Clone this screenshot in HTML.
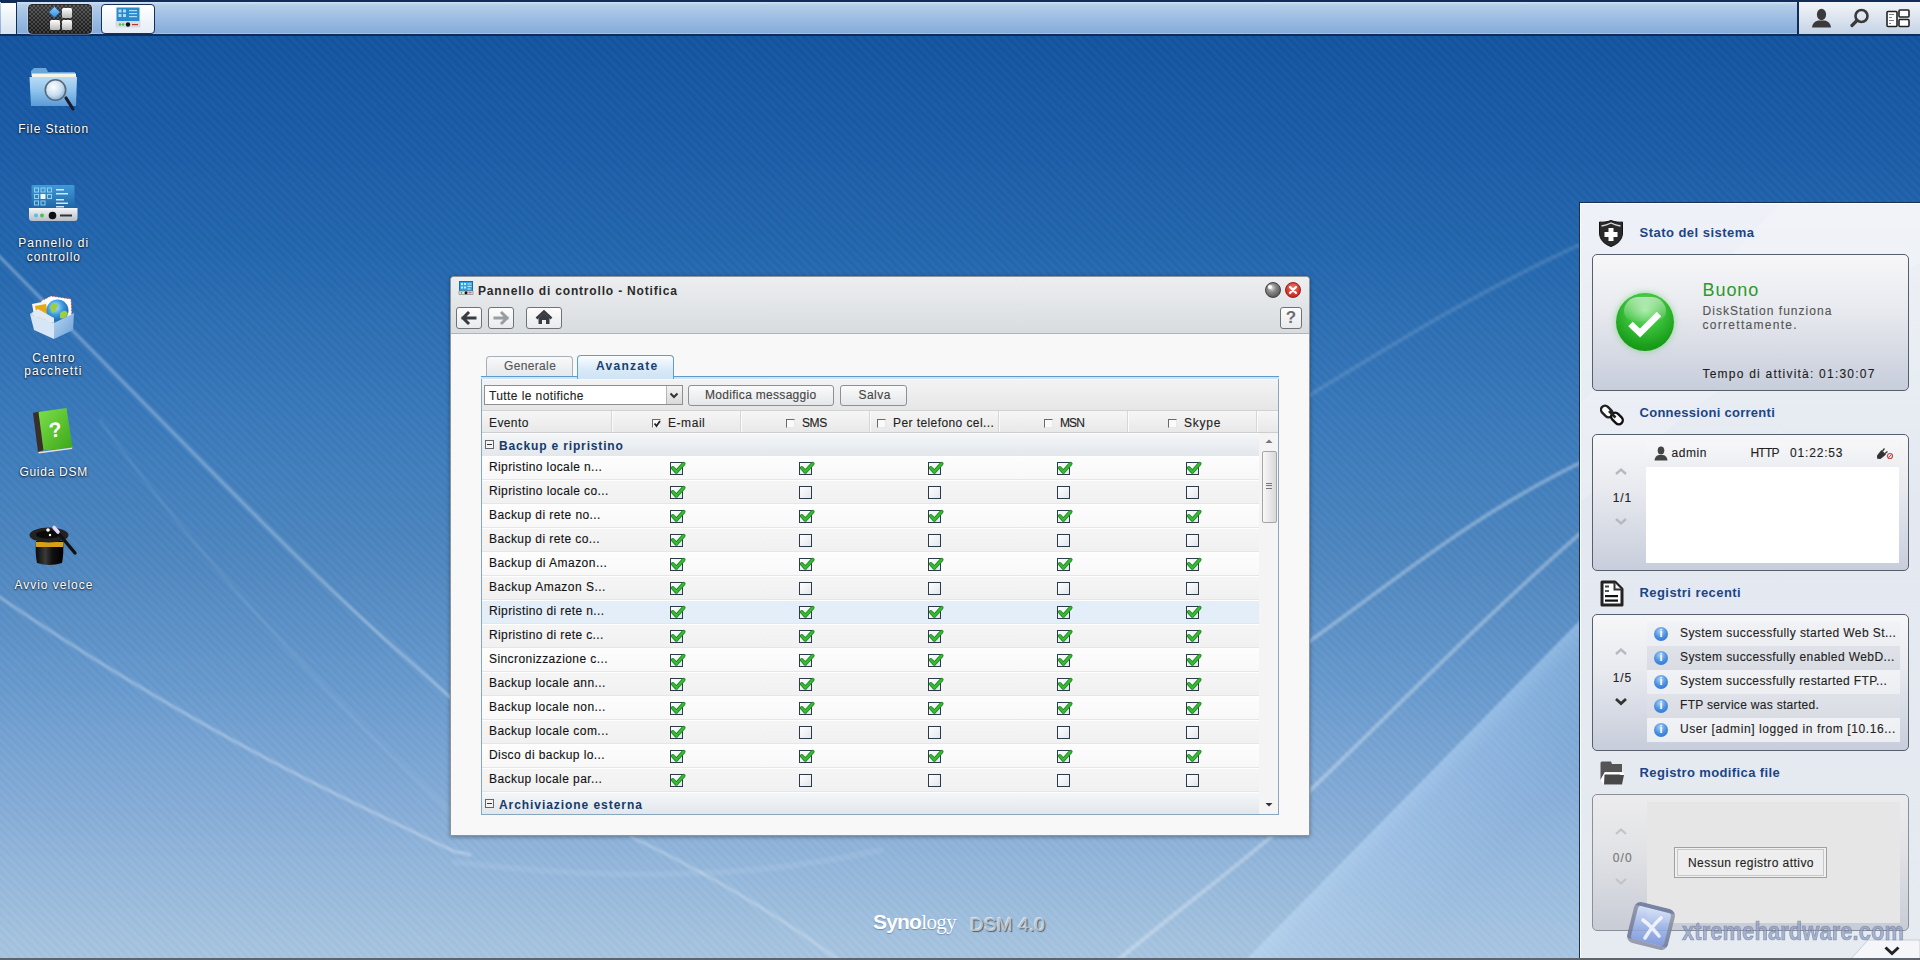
<!DOCTYPE html>
<html><head><meta charset="utf-8">
<style>
*{margin:0;padding:0;box-sizing:border-box;}
html,body{width:1920px;height:960px;overflow:hidden;}
body{position:relative;font-family:"Liberation Sans", sans-serif;font-size:12px;color:#222;
background:linear-gradient(180deg,#1254a0 0px,#1254a0 36px,#1a5ca8 150px,#2266ae 250px,#3a7abc 430px,#4e87c0 560px,#6699ce 680px,#84acd8 800px,#a4c3e0 940px,#a6c5e2 960px);}
.a{position:absolute;}
.t{position:absolute;white-space:nowrap;line-height:1;}
#stripes{position:absolute;left:0;top:0;width:1920px;height:960px;
background:repeating-linear-gradient(45deg,rgba(255,255,255,0.03) 0px,rgba(0,0,0,0.025) 3px,rgba(255,255,255,0.03) 6px);}
</style></head><body>
<div id="stripes"></div>
<svg class="a" style="left:0;top:0" width="1920" height="960" viewBox="0 0 1920 960">
<defs><filter id="blr" x="-10%" y="-10%" width="120%" height="120%"><feGaussianBlur stdDeviation="0.9"/></filter></defs>
<g fill="none" stroke="#ffffff" stroke-linecap="round" filter="url(#blr)">
<path d="M-5,252 C60,318 150,410 262,522 S400,650 470,716" stroke-opacity="0.32" stroke-width="3"/>
<path d="M-5,594 C80,652 200,728 350,801 S440,845 470,855" stroke-opacity="0.3" stroke-width="3"/>
<path d="M100,420 C200,560 330,700 470,830" stroke-opacity="0.1" stroke-width="2.5"/>
<path d="M1305,398 C1400,340 1480,290 1590,240" stroke-opacity="0.12" stroke-width="4"/>
<path d="M1300,648 C1390,585 1470,515 1590,458" stroke-opacity="0.3" stroke-width="4"/>
<path d="M1300,800 C1390,715 1480,620 1590,525" stroke-opacity="0.3" stroke-width="4"/>
<path d="M1272,836 C1220,880 1165,920 1112,965" stroke-opacity="0.28" stroke-width="4"/>
<path d="M630,836 C700,870 780,915 845,965" stroke-opacity="0.25" stroke-width="3"/>
<path d="M455,862 C600,880 750,880 880,850" stroke-opacity="0.08" stroke-width="6"/>
</g>
<defs><linearGradient id="band" gradientUnits="userSpaceOnUse" x1="1413" y1="790" x2="1484" y2="860"><stop offset="0" stop-color="#c8e4ff" stop-opacity="0.45"/><stop offset="0.2" stop-color="#c0dcfa" stop-opacity="0.32"/><stop offset="1" stop-color="#b0d0f4" stop-opacity="0.14"/></linearGradient></defs>
<path d="M1228,978 L1598,602 L1598,978 Z" fill="url(#band)" filter="url(#blr)"/>
</svg><svg class="a" style="left:0;top:0;overflow:visible" width="100" height="600" viewBox="0 0 100 600"><defs><linearGradient id="fold" x1="0" y1="0" x2="0" y2="1"><stop offset="0" stop-color="#b9dcf6"/><stop offset="0.5" stop-color="#8cc2ec"/><stop offset="1" stop-color="#5a9ad6"/></linearGradient><radialGradient id="lens" cx="0.4" cy="0.35" r="0.7"><stop offset="0" stop-color="#ffffff"/><stop offset="0.6" stop-color="#c8def0"/><stop offset="1" stop-color="#7aa8d0"/></radialGradient><linearGradient id="scr" x1="0" y1="0" x2="0" y2="1"><stop offset="0" stop-color="#3f9ad8"/><stop offset="1" stop-color="#1c5f9e"/></linearGradient><linearGradient id="base" x1="0" y1="0" x2="0" y2="1"><stop offset="0" stop-color="#f4f6f8"/><stop offset="1" stop-color="#b8bec6"/></linearGradient><radialGradient id="globe" cx="0.4" cy="0.35" r="0.7"><stop offset="0" stop-color="#bfe8ff"/><stop offset="0.5" stop-color="#3a9ae0"/><stop offset="1" stop-color="#1a5aa0"/></radialGradient><linearGradient id="box" x1="0" y1="0" x2="1" y2="1"><stop offset="0" stop-color="#b8d6f2"/><stop offset="1" stop-color="#6a9ed6"/></linearGradient><linearGradient id="book" x1="0" y1="0" x2="1" y2="1"><stop offset="0" stop-color="#7ee04a"/><stop offset="1" stop-color="#3aa618"/></linearGradient><linearGradient id="hat" x1="0" y1="0" x2="1" y2="0"><stop offset="0" stop-color="#0a0a0a"/><stop offset="0.35" stop-color="#3a3a3a"/><stop offset="0.6" stop-color="#111"/><stop offset="1" stop-color="#000"/></linearGradient></defs><path d="M34,68 H46 L48,72 H75 V76 H31 V71 Z" fill="#6aa6dc"/><rect x="32" y="73.5" width="44" height="5" fill="#f6f4e2"/><path d="M29.5,77 H77 L76,106 H31 Z" fill="url(#fold)"/><path d="M66,98 L73,109" stroke="#1a1a2a" stroke-width="3.2" stroke-linecap="round"/><circle cx="55.5" cy="90" r="10.2" fill="url(#lens)" stroke="#5a6878" stroke-width="1.6"/><rect x="31.5" y="185" width="43" height="26" rx="1.5" fill="url(#scr)"/><g fill="none" stroke="#8fd0f4" stroke-width="1"><rect x="34.5" y="188" width="4" height="4"/><rect x="41" y="188" width="4" height="4"/><rect x="47.5" y="188" width="4" height="4"/><rect x="34.5" y="194.5" width="4" height="4"/><rect x="47.5" y="194.5" width="4" height="4"/><rect x="34.5" y="201" width="4" height="4"/><rect x="41" y="201" width="4" height="4"/></g><rect x="40.5" y="194" width="5" height="5" fill="#e8f6ff"/><g fill="#cde8fa"><rect x="56" y="189" width="8" height="1.5"/><rect x="56" y="193" width="12" height="1.5"/><rect x="56" y="199" width="8" height="1.5"/><rect x="56" y="202.5" width="12" height="1.5"/><rect x="56" y="206" width="8" height="1.5"/></g><path d="M29,208 H77.5 V218 Q77.5,221 74.5,221 H32 Q29,221 29,218 Z" fill="url(#base)"/><circle cx="36" cy="215.5" r="2" fill="#5ab8f0"/><circle cx="42" cy="215.5" r="2" fill="#50c050"/><circle cx="52.5" cy="215.5" r="3.8" fill="#111"/><rect x="60" y="214.5" width="12" height="2" fill="#333"/><path d="M41,301 L51,296 L71,299 L72,318 L50,322 Z" fill="#fff" stroke="#c84040" stroke-width="0.8" stroke-dasharray="1.5 1.5"/><path d="M32,304 L47,301 L51,322 L36,326 Z" fill="#f4f4f4"/><path d="M35,306 L46,304 L49,320 L38,322 Z" fill="#e8a810"/><circle cx="57.5" cy="310.5" r="11" fill="url(#globe)"/><path d="M50,306 Q54,302 58,305 Q56,312 52,313 Z M60,313 Q66,308 68,314 Q64,320 60,318 Z" fill="#9ad040"/><path d="M30,314 L54,323 L54,339 L34,330 Z" fill="#d6e6f6"/><path d="M54,323 L74,313 L73,330 L54,339 Z" fill="url(#box)"/><path d="M30,314 L38,309 L54,318 L54,323 Z" fill="#dfeaf6"/><path d="M33,413 L39,411.5 L44,450 L38,452 Z" fill="#3a2e2a"/><path d="M38.5,412 L66.5,408 L72.5,447.5 L43.5,450.5 Z" fill="url(#book)"/><path d="M38,452 L72.5,447.5 L72,449 L39,453.5 Z" fill="#e0e0d0"/><text x="55" y="437" font-family="Liberation Sans" font-weight="bold" font-size="21" fill="#fff" text-anchor="middle" transform="rotate(-7 55 428)">?</text><path d="M36,541 Q35,553 37,563 Q49,567 62,563 Q64,553 63,541 Z" fill="url(#hat)"/><rect x="36" y="542" width="27" height="5" fill="#d8a018"/><ellipse cx="49" cy="535" rx="19.5" ry="7.5" fill="#222"/><ellipse cx="48" cy="534.5" rx="12" ry="4" fill="#0a0a0a"/><path d="M54,528 L75,553" stroke="#111" stroke-width="3.4" stroke-linecap="round"/><path d="M54,527.5 L58,532" stroke="#e6d8ff" stroke-width="3.6" stroke-linecap="round"/><circle cx="48" cy="530" r="1.8" fill="#fff"/><circle cx="50" cy="535" r="1.2" fill="#fff"/></svg><div class="t" style="left:18.3px;top:122.84px;font-size:12px;letter-spacing:0.889px;color:#fff;font-weight:normal;color:#fff;text-shadow:0 1px 2px rgba(0,0,0,0.75),0 0 2px rgba(0,0,0,0.5);">File Station</div><div class="t" style="left:18.3px;top:236.84px;font-size:12px;letter-spacing:1.042px;color:#fff;font-weight:normal;color:#fff;text-shadow:0 1px 2px rgba(0,0,0,0.75),0 0 2px rgba(0,0,0,0.5);">Pannello di</div><div class="t" style="left:26.7px;top:250.84px;font-size:12px;letter-spacing:0.993px;color:#fff;font-weight:normal;color:#fff;text-shadow:0 1px 2px rgba(0,0,0,0.75),0 0 2px rgba(0,0,0,0.5);">controllo</div><div class="t" style="left:32.3px;top:351.84px;font-size:12px;letter-spacing:1.217px;color:#fff;font-weight:normal;color:#fff;text-shadow:0 1px 2px rgba(0,0,0,0.75),0 0 2px rgba(0,0,0,0.5);">Centro</div><div class="t" style="left:24.2px;top:364.84px;font-size:12px;letter-spacing:1.161px;color:#fff;font-weight:normal;color:#fff;text-shadow:0 1px 2px rgba(0,0,0,0.75),0 0 2px rgba(0,0,0,0.5);">pacchetti</div><div class="t" style="left:19.4px;top:465.84px;font-size:12px;letter-spacing:0.723px;color:#fff;font-weight:normal;color:#fff;text-shadow:0 1px 2px rgba(0,0,0,0.75),0 0 2px rgba(0,0,0,0.5);">Guida DSM</div><div class="t" style="left:14.5px;top:578.84px;font-size:12px;letter-spacing:0.969px;color:#fff;font-weight:normal;color:#fff;text-shadow:0 1px 2px rgba(0,0,0,0.75),0 0 2px rgba(0,0,0,0.5);">Avvio veloce</div><div class="t" style="left:873px;top:911px;font-size:21px;font-weight:bold;color:#fff;letter-spacing:-0.8px;text-shadow:0 1px 1px rgba(60,90,130,0.5);">Syno<span style="font-family:'Liberation Serif',serif;font-weight:normal;letter-spacing:-0.6px;">logy</span></div><div class="t" style="left:970px;top:915px;font-size:19px;color:#b9c3cc;letter-spacing:0.2px;text-shadow:1px 1px 1px rgba(40,50,60,0.7),-1px -1px 0 rgba(255,255,255,0.6);">DSM 4.0</div><div class="a" style="left:0;top:0;width:1920px;height:36px;background:#0f2d58;"></div><div class="a" style="left:0;top:2px;width:1920px;height:32px;background:linear-gradient(180deg,#d2e2f3 0,#b4cde9 3px,#9dbde3 16px,#86acd9 31px,#c4d6ec 32px);"></div><div class="a" style="left:1px;top:2px;width:16px;height:33px;background:linear-gradient(180deg,#ffffff,#d7e3f0);border:1px solid #142c52;border-left:none;"></div><div class="a" style="left:28px;top:4px;width:64px;height:30px;border-radius:4px;background:linear-gradient(180deg,rgba(255,255,255,0.12) 0,rgba(255,255,255,0.04) 50%,rgba(0,0,0,0.1) 100%),repeating-conic-gradient(#1c1c1c 0 25%,#484848 0 50%) 0 0/4px 4px;border:1px solid #2a2a2a;box-shadow:0 0 0 1px rgba(255,255,255,0.25);"></div><div class="a" style="left:101px;top:4px;width:54px;height:30px;border-radius:4px;background:linear-gradient(180deg,#ffffff,#e6edf5);border:1px solid #14305c;"></div><div class="a" style="left:1797px;top:2px;width:123px;height:33px;background:linear-gradient(180deg,#f2f5fa 0,#dce4ef 50%,#c4d3e6 100%);border-left:2px solid #0f2d58;border-bottom:1px solid #0f2d58;"></div><svg class="a" style="left:28px;top:4px" width="64" height="30" viewBox="0 0 64 30"><defs><linearGradient id="sq" x1="0" y1="0" x2="0" y2="1"><stop offset="0" stop-color="#ffffff"/><stop offset="1" stop-color="#b8b8b8"/></linearGradient><linearGradient id="dia" x1="0" y1="0" x2="0" y2="1"><stop offset="0" stop-color="#8ed0ff"/><stop offset="1" stop-color="#2a8ae0"/></linearGradient></defs><path d="M26.5,2.5 L32,8.2 L26.5,14 L21,8.2 Z" fill="url(#dia)" stroke="#1a4a80" stroke-width="0.6"/><rect x="34" y="4" width="10" height="10" rx="1.5" fill="url(#sq)"/><rect x="22" y="16" width="10" height="10" rx="1.5" fill="url(#sq)"/><rect x="34" y="16" width="10" height="10" rx="1.5" fill="url(#sq)"/></svg><svg class="a" style="left:101px;top:4px" width="54" height="30" viewBox="0 0 54 30"><rect x="15.5" y="3.5" width="23" height="14" fill="#2a8ad0"/><g fill="#a8dcf8"><rect x="17.5" y="5.5" width="3" height="3"/><rect x="22" y="5.5" width="3" height="3"/><rect x="17.5" y="10" width="3" height="3"/><rect x="22" y="10" width="3" height="3"/><rect x="28" y="6" width="8" height="1.2"/><rect x="28" y="9" width="8" height="1.2"/><rect x="28" y="12" width="8" height="1.2"/></g><path d="M14.5,17 H39.5 V22 Q39.5,23.5 38,23.5 H16 Q14.5,23.5 14.5,22 Z" fill="#d6dce2"/><circle cx="27" cy="20.5" r="2.2" fill="#111"/><circle cx="19" cy="20.5" r="1.2" fill="#50c050"/><circle cx="22" cy="20.5" r="1.2" fill="#50c050"/><rect x="31" y="20" width="6" height="1.2" fill="#c03040"/></svg><svg class="a" style="left:1810px;top:8px" width="104" height="22" viewBox="0 0 104 22"><ellipse cx="11.5" cy="6.5" rx="4.6" ry="5.8" fill="#3a3a3a"/><path d="M2,19.5 Q2.5,14 8,12.5 L15,12.5 Q20.5,14 21,19.5 Z" fill="#3a3a3a"/><circle cx="51.5" cy="8" r="6" fill="none" stroke="#3a3a3a" stroke-width="2.6"/><path d="M47,12.5 L42,17.5" stroke="#3a3a3a" stroke-width="3.2" stroke-linecap="round"/><rect x="77" y="3.5" width="10" height="15" rx="1" fill="#fff" stroke="#222" stroke-width="1.6"/><rect x="89" y="2" width="10" height="7" rx="1" fill="#fff" stroke="#222" stroke-width="1.6"/><rect x="89" y="11.5" width="10" height="7" rx="1" fill="#fff" stroke="#222" stroke-width="1.6"/><g fill="#666"><rect x="79" y="6" width="5" height="0.8"/><rect x="79" y="9" width="3" height="0.8"/><rect x="79" y="12" width="5" height="0.8"/><rect x="79" y="15" width="2" height="0.8"/></g></svg><svg width="0" height="0" style="position:absolute"><defs><linearGradient id="cbg" x1="0" y1="0" x2="1" y2="1"><stop offset="0" stop-color="#ffffff"/><stop offset="1" stop-color="#e2e6ea"/></linearGradient></defs></svg><div class="a" style="left:450px;top:276px;width:860px;height:560px;background:#f8f8f8;border:1px solid #8f949a;border-radius:4px 4px 0 0;box-shadow:0 1px 4px rgba(0,0,0,0.35);"></div><div class="a" style="left:451px;top:277px;width:858px;height:57px;background:linear-gradient(180deg,#eceef0,#d9dcdf);border-bottom:1px solid #b0b4b8;border-radius:3px 3px 0 0;"></div><svg class="a" style="left:458px;top:280px" width="16" height="16" viewBox="0 0 16 16"><rect x="1.5" y="1.5" width="13" height="9.5" fill="#2ea4e4" stroke="#1a6a9a" stroke-width="1"/><g fill="#bfeaff"><rect x="3" y="3" width="2" height="2"/><rect x="6" y="3" width="2" height="2"/><rect x="3" y="6.5" width="2" height="2"/><rect x="6" y="6.5" width="2" height="2"/><rect x="9.5" y="3.5" width="4" height="1"/><rect x="9.5" y="6" width="4" height="1"/><rect x="9.5" y="8.5" width="3" height="1"/></g><path d="M1,11 H15 V14.5 H1 Z" fill="#e4e8ec" stroke="#8a9098" stroke-width="0.8"/><circle cx="3.5" cy="12.8" r="0.9" fill="#3cb043"/><circle cx="8" cy="12.8" r="1.5" fill="#111"/><rect x="10.5" y="12.3" width="3" height="1" fill="#c04050"/></svg><div class="t" style="left:478px;top:284.84px;font-size:12px;letter-spacing:0.824px;color:#2a2a2a;font-weight:bold;">Pannello di controllo - Notifica</div><div class="a" style="left:456px;top:307px;width:26px;height:22px;border:1px solid #6f7378;border-radius:3px;background:linear-gradient(180deg,#fdfdfd,#e9eaec);"></div><div class="a" style="left:488px;top:307px;width:26px;height:22px;border:1px solid #6f7378;border-radius:3px;background:linear-gradient(180deg,#fdfdfd,#e9eaec);"></div><div class="a" style="left:526px;top:307px;width:36px;height:22px;border:1px solid #6f7378;border-radius:3px;background:linear-gradient(180deg,#fdfdfd,#e9eaec);"></div><div class="a" style="left:1280px;top:307px;width:22px;height:22px;border:1px solid #6f7378;border-radius:3px;background:linear-gradient(180deg,#fdfdfd,#e9eaec);"></div><svg class="a" style="left:456px;top:307px" width="26" height="22" viewBox="0 0 26 22"><path d="M7,11 L12,6 M7,11 L12,16 M7,11 L19,11" stroke="#383c40" stroke-width="3" fill="none" stroke-linecap="square"/></svg><svg class="a" style="left:488px;top:307px" width="26" height="22" viewBox="0 0 26 22"><path d="M19,11 L14,6 M19,11 L14,16 M19,11 L7,11" stroke="#9a9da0" stroke-width="3" fill="none" stroke-linecap="square"/></svg><svg class="a" style="left:526px;top:307px" width="36" height="22" viewBox="0 0 36 22"><path d="M10.5,11.5 L18,4.5 L25.5,11.5" stroke="#383c40" stroke-width="2.6" fill="none"/><path d="M12.5,11 L18,6 L23.5,11 L23.5,17 L20,17 L20,13 L16,13 L16,17 L12.5,17 Z" fill="#383c40"/></svg><div class="t" style="left:1285px;top:309px;width:12px;text-align:center;font-size:17px;font-weight:bold;color:#6c6f72;">?</div><div class="a" style="left:1265px;top:282px;width:16px;height:16px;border-radius:8px;background:radial-gradient(circle at 40% 35%,#e0e0e0 0,#8a8a8a 35%,#5a5a5a 75%,#3a3a3a 100%);border:1px solid #404040;"></div><div class="a" style="left:1268px;top:285px;width:4px;height:4px;border-radius:2px;background:#fff;"></div><div class="a" style="left:1285px;top:282px;width:16px;height:16px;border-radius:8px;background:radial-gradient(circle at 50% 35%,#f07a70 0,#d43a30 55%,#b0201a 100%);border:1px solid #a01a14;"></div><svg class="a" style="left:1285px;top:282px" width="16" height="16" viewBox="0 0 16 16"><path d="M5,5 L11,11 M11,5 L5,11" stroke="#fff" stroke-width="2.4" stroke-linecap="round"/></svg><div class="a" style="left:486px;top:356px;width:87px;height:21px;border:1px solid #a7b0b8;border-bottom:none;border-radius:4px 4px 0 0;background:linear-gradient(180deg,#f8f9fa,#e3e7eb);"></div><div class="t" style="left:504px;top:359.84px;font-size:12px;letter-spacing:0.349px;color:#555;font-weight:normal;-webkit-text-stroke:0.12px currentColor;">Generale</div><div class="a" style="left:481px;top:376px;width:798px;height:4px;background:#cfe3f4;border-top:1px solid #5c9ccd;border-bottom:1px solid #5c9ccd;"></div><div class="a" style="left:577px;top:355px;width:97px;height:24px;border:1px solid #5f9dd0;border-bottom:none;border-radius:4px 4px 0 0;background:linear-gradient(180deg,#fafdff,#d8e9f8 60%,#cfe3f4);"></div><div class="t" style="left:596px;top:359.84px;font-size:12px;letter-spacing:1.279px;color:#1b3f6e;font-weight:bold;">Avanzate</div><div class="a" style="left:481px;top:379px;width:798px;height:436px;border:1px solid #88a6bd;border-top:none;background:#f8f8f8;"></div><div class="a" style="left:482px;top:380px;width:796px;height:31px;background:linear-gradient(180deg,#f3f3f3,#e6e6e6);border-bottom:1px solid #d2d2d2;"></div><div class="a" style="left:484px;top:385px;width:199px;height:20px;border:1px solid #8f8f8f;background:#fff;"></div><div class="a" style="left:666px;top:386px;width:16px;height:18px;border-left:1px solid #b5b5b5;background:linear-gradient(180deg,#f4f4f4,#d9d9d9);"></div><svg class="a" style="left:666px;top:386px" width="16" height="18" viewBox="0 0 16 18"><path d="M4.5,7.5 L8,11 L11.5,7.5" stroke="#333" stroke-width="2" fill="none"/></svg><div class="t" style="left:489px;top:389.84px;font-size:12px;letter-spacing:0.407px;color:#222;font-weight:normal;-webkit-text-stroke:0.12px currentColor;">Tutte le notifiche</div><div class="a" style="left:688px;top:385px;width:146px;height:21px;border:1px solid #8c8f93;border-radius:3px;background:linear-gradient(180deg,#fbfbfb,#e4e6e8);"></div><div class="t" style="left:705px;top:388.84px;font-size:12px;letter-spacing:0.303px;color:#444;font-weight:normal;-webkit-text-stroke:0.12px currentColor;">Modifica messaggio</div><div class="a" style="left:840px;top:385px;width:67px;height:21px;border:1px solid #8c8f93;border-radius:3px;background:linear-gradient(180deg,#fbfbfb,#e4e6e8);"></div><div class="t" style="left:858.5px;top:388.84px;font-size:12px;letter-spacing:0.446px;color:#444;font-weight:normal;-webkit-text-stroke:0.12px currentColor;">Salva</div><div class="a" style="left:482px;top:411px;width:796px;height:22px;background:linear-gradient(180deg,#f6f6f6,#e8e8e8);border-bottom:1px solid #cdcdcd;"></div><div class="a" style="left:611px;top:411px;width:1px;height:21px;background:#d6d6d6;"></div><div class="a" style="left:612px;top:411px;width:1px;height:21px;background:#fbfbfb;"></div><div class="a" style="left:740px;top:411px;width:1px;height:21px;background:#d6d6d6;"></div><div class="a" style="left:741px;top:411px;width:1px;height:21px;background:#fbfbfb;"></div><div class="a" style="left:869px;top:411px;width:1px;height:21px;background:#d6d6d6;"></div><div class="a" style="left:870px;top:411px;width:1px;height:21px;background:#fbfbfb;"></div><div class="a" style="left:998px;top:411px;width:1px;height:21px;background:#d6d6d6;"></div><div class="a" style="left:999px;top:411px;width:1px;height:21px;background:#fbfbfb;"></div><div class="a" style="left:1127px;top:411px;width:1px;height:21px;background:#d6d6d6;"></div><div class="a" style="left:1128px;top:411px;width:1px;height:21px;background:#fbfbfb;"></div><div class="a" style="left:1256px;top:411px;width:1px;height:21px;background:#d6d6d6;"></div><div class="a" style="left:1257px;top:411px;width:1px;height:21px;background:#fbfbfb;"></div><div class="t" style="left:489px;top:416.84px;font-size:12px;letter-spacing:0.391px;color:#222;font-weight:normal;-webkit-text-stroke:0.12px currentColor;">Evento</div><div class="a" style="left:652px;top:419px;width:9px;height:9px;border-top:1.5px solid #6a6a6a;border-left:1.5px solid #6a6a6a;border-right:1px solid #e8e8e8;border-bottom:1px solid #e8e8e8;background:#fafafa;"></div><svg class="a" style="left:652px;top:419px" width="10" height="10" viewBox="0 0 10 10"><path d="M2.5,4.5 L4.5,7 L8,2" stroke="#222" stroke-width="1.8" fill="none"/></svg><div class="t" style="left:668px;top:416.84px;font-size:12px;letter-spacing:0.557px;color:#222;font-weight:normal;-webkit-text-stroke:0.12px currentColor;">E-mail</div><div class="a" style="left:786px;top:419px;width:9px;height:9px;border-top:1.5px solid #6a6a6a;border-left:1.5px solid #6a6a6a;border-right:1px solid #e8e8e8;border-bottom:1px solid #e8e8e8;background:#fafafa;"></div><div class="t" style="left:802px;top:416.84px;font-size:12px;letter-spacing:-0.400px;color:#222;font-weight:normal;-webkit-text-stroke:0.12px currentColor;">SMS</div><div class="a" style="left:877px;top:419px;width:9px;height:9px;border-top:1.5px solid #6a6a6a;border-left:1.5px solid #6a6a6a;border-right:1px solid #e8e8e8;border-bottom:1px solid #e8e8e8;background:#fafafa;"></div><div class="t" style="left:893px;top:416.84px;font-size:12px;letter-spacing:0.414px;color:#222;font-weight:normal;-webkit-text-stroke:0.12px currentColor;">Per telefono cel...</div><div class="a" style="left:1044px;top:419px;width:9px;height:9px;border-top:1.5px solid #6a6a6a;border-left:1.5px solid #6a6a6a;border-right:1px solid #e8e8e8;border-bottom:1px solid #e8e8e8;background:#fafafa;"></div><div class="t" style="left:1060px;top:416.84px;font-size:12px;letter-spacing:-0.936px;color:#222;font-weight:normal;-webkit-text-stroke:0.12px currentColor;">MSN</div><div class="a" style="left:1168px;top:419px;width:9px;height:9px;border-top:1.5px solid #6a6a6a;border-left:1.5px solid #6a6a6a;border-right:1px solid #e8e8e8;border-bottom:1px solid #e8e8e8;background:#fafafa;"></div><div class="t" style="left:1184px;top:416.84px;font-size:12px;letter-spacing:0.764px;color:#222;font-weight:normal;-webkit-text-stroke:0.12px currentColor;">Skype</div><div class="a" style="left:482px;top:433px;width:777px;height:23px;background:linear-gradient(180deg,#f4f6f8,#e2e7ec);border-top:1px solid #fbfcfd;"></div><div class="a" style="left:485px;top:440px;width:9px;height:9px;border:1px solid #666;background:#f4f4f4;"></div><div class="a" style="left:487px;top:444px;width:5px;height:1px;background:#333;"></div><div class="t" style="left:499px;top:439.84px;font-size:12px;letter-spacing:0.841px;color:#143a6a;font-weight:bold;">Backup e ripristino</div><div class="a" style="left:482px;top:456px;width:777px;height:24px;background:linear-gradient(180deg,#fdfdfd,#f8f8f8);border-top:1px solid #ffffff;border-bottom:1px solid #e6e6e6;"></div><div class="t" style="left:489px;top:460.84px;font-size:12px;letter-spacing:0.387px;color:#111;font-weight:normal;-webkit-text-stroke:0.12px currentColor;">Ripristino locale n...</div><div class="a" style="left:670px;top:462px;width:13px;height:13px;"><svg width="16" height="16" viewBox="0 0 16 16" style="position:absolute;left:0;top:-1px;overflow:visible"><rect x="0.5" y="1.5" width="12" height="12" fill="url(#cbg)" stroke="#2b3b4b" stroke-width="1"/><path d="M2.8,7 L6.4,10.8 L13.6,2.8" fill="none" stroke="#1a861a" stroke-width="3.9" stroke-linecap="round" stroke-linejoin="round"/><path d="M2.8,7 L6.4,10.8 L13.6,2.8" fill="none" stroke="#36ba36" stroke-width="2.3" stroke-linecap="round" stroke-linejoin="round"/></svg></div><div class="a" style="left:799px;top:462px;width:13px;height:13px;"><svg width="16" height="16" viewBox="0 0 16 16" style="position:absolute;left:0;top:-1px;overflow:visible"><rect x="0.5" y="1.5" width="12" height="12" fill="url(#cbg)" stroke="#2b3b4b" stroke-width="1"/><path d="M2.8,7 L6.4,10.8 L13.6,2.8" fill="none" stroke="#1a861a" stroke-width="3.9" stroke-linecap="round" stroke-linejoin="round"/><path d="M2.8,7 L6.4,10.8 L13.6,2.8" fill="none" stroke="#36ba36" stroke-width="2.3" stroke-linecap="round" stroke-linejoin="round"/></svg></div><div class="a" style="left:928px;top:462px;width:13px;height:13px;"><svg width="16" height="16" viewBox="0 0 16 16" style="position:absolute;left:0;top:-1px;overflow:visible"><rect x="0.5" y="1.5" width="12" height="12" fill="url(#cbg)" stroke="#2b3b4b" stroke-width="1"/><path d="M2.8,7 L6.4,10.8 L13.6,2.8" fill="none" stroke="#1a861a" stroke-width="3.9" stroke-linecap="round" stroke-linejoin="round"/><path d="M2.8,7 L6.4,10.8 L13.6,2.8" fill="none" stroke="#36ba36" stroke-width="2.3" stroke-linecap="round" stroke-linejoin="round"/></svg></div><div class="a" style="left:1057px;top:462px;width:13px;height:13px;"><svg width="16" height="16" viewBox="0 0 16 16" style="position:absolute;left:0;top:-1px;overflow:visible"><rect x="0.5" y="1.5" width="12" height="12" fill="url(#cbg)" stroke="#2b3b4b" stroke-width="1"/><path d="M2.8,7 L6.4,10.8 L13.6,2.8" fill="none" stroke="#1a861a" stroke-width="3.9" stroke-linecap="round" stroke-linejoin="round"/><path d="M2.8,7 L6.4,10.8 L13.6,2.8" fill="none" stroke="#36ba36" stroke-width="2.3" stroke-linecap="round" stroke-linejoin="round"/></svg></div><div class="a" style="left:1186px;top:462px;width:13px;height:13px;"><svg width="16" height="16" viewBox="0 0 16 16" style="position:absolute;left:0;top:-1px;overflow:visible"><rect x="0.5" y="1.5" width="12" height="12" fill="url(#cbg)" stroke="#2b3b4b" stroke-width="1"/><path d="M2.8,7 L6.4,10.8 L13.6,2.8" fill="none" stroke="#1a861a" stroke-width="3.9" stroke-linecap="round" stroke-linejoin="round"/><path d="M2.8,7 L6.4,10.8 L13.6,2.8" fill="none" stroke="#36ba36" stroke-width="2.3" stroke-linecap="round" stroke-linejoin="round"/></svg></div><div class="a" style="left:482px;top:480px;width:777px;height:24px;background:linear-gradient(180deg,#f5f5f5,#f1f1f1);border-top:1px solid #ffffff;border-bottom:1px solid #e6e6e6;"></div><div class="t" style="left:489px;top:484.84px;font-size:12px;letter-spacing:0.389px;color:#111;font-weight:normal;-webkit-text-stroke:0.12px currentColor;">Ripristino locale co...</div><div class="a" style="left:670px;top:486px;width:13px;height:13px;"><svg width="16" height="16" viewBox="0 0 16 16" style="position:absolute;left:0;top:-1px;overflow:visible"><rect x="0.5" y="1.5" width="12" height="12" fill="url(#cbg)" stroke="#2b3b4b" stroke-width="1"/><path d="M2.8,7 L6.4,10.8 L13.6,2.8" fill="none" stroke="#1a861a" stroke-width="3.9" stroke-linecap="round" stroke-linejoin="round"/><path d="M2.8,7 L6.4,10.8 L13.6,2.8" fill="none" stroke="#36ba36" stroke-width="2.3" stroke-linecap="round" stroke-linejoin="round"/></svg></div><div class="a" style="left:799px;top:486px;width:13px;height:13px;"><svg width="16" height="16" viewBox="0 0 16 16" style="position:absolute;left:0;top:-1px;overflow:visible"><rect x="0.5" y="1.5" width="12" height="12" fill="url(#cbg)" stroke="#2b3b4b" stroke-width="1"/></svg></div><div class="a" style="left:928px;top:486px;width:13px;height:13px;"><svg width="16" height="16" viewBox="0 0 16 16" style="position:absolute;left:0;top:-1px;overflow:visible"><rect x="0.5" y="1.5" width="12" height="12" fill="url(#cbg)" stroke="#2b3b4b" stroke-width="1"/></svg></div><div class="a" style="left:1057px;top:486px;width:13px;height:13px;"><svg width="16" height="16" viewBox="0 0 16 16" style="position:absolute;left:0;top:-1px;overflow:visible"><rect x="0.5" y="1.5" width="12" height="12" fill="url(#cbg)" stroke="#2b3b4b" stroke-width="1"/></svg></div><div class="a" style="left:1186px;top:486px;width:13px;height:13px;"><svg width="16" height="16" viewBox="0 0 16 16" style="position:absolute;left:0;top:-1px;overflow:visible"><rect x="0.5" y="1.5" width="12" height="12" fill="url(#cbg)" stroke="#2b3b4b" stroke-width="1"/></svg></div><div class="a" style="left:482px;top:504px;width:777px;height:24px;background:linear-gradient(180deg,#fdfdfd,#f8f8f8);border-top:1px solid #ffffff;border-bottom:1px solid #e6e6e6;"></div><div class="t" style="left:489px;top:508.84px;font-size:12px;letter-spacing:0.423px;color:#111;font-weight:normal;-webkit-text-stroke:0.12px currentColor;">Backup di rete no...</div><div class="a" style="left:670px;top:510px;width:13px;height:13px;"><svg width="16" height="16" viewBox="0 0 16 16" style="position:absolute;left:0;top:-1px;overflow:visible"><rect x="0.5" y="1.5" width="12" height="12" fill="url(#cbg)" stroke="#2b3b4b" stroke-width="1"/><path d="M2.8,7 L6.4,10.8 L13.6,2.8" fill="none" stroke="#1a861a" stroke-width="3.9" stroke-linecap="round" stroke-linejoin="round"/><path d="M2.8,7 L6.4,10.8 L13.6,2.8" fill="none" stroke="#36ba36" stroke-width="2.3" stroke-linecap="round" stroke-linejoin="round"/></svg></div><div class="a" style="left:799px;top:510px;width:13px;height:13px;"><svg width="16" height="16" viewBox="0 0 16 16" style="position:absolute;left:0;top:-1px;overflow:visible"><rect x="0.5" y="1.5" width="12" height="12" fill="url(#cbg)" stroke="#2b3b4b" stroke-width="1"/><path d="M2.8,7 L6.4,10.8 L13.6,2.8" fill="none" stroke="#1a861a" stroke-width="3.9" stroke-linecap="round" stroke-linejoin="round"/><path d="M2.8,7 L6.4,10.8 L13.6,2.8" fill="none" stroke="#36ba36" stroke-width="2.3" stroke-linecap="round" stroke-linejoin="round"/></svg></div><div class="a" style="left:928px;top:510px;width:13px;height:13px;"><svg width="16" height="16" viewBox="0 0 16 16" style="position:absolute;left:0;top:-1px;overflow:visible"><rect x="0.5" y="1.5" width="12" height="12" fill="url(#cbg)" stroke="#2b3b4b" stroke-width="1"/><path d="M2.8,7 L6.4,10.8 L13.6,2.8" fill="none" stroke="#1a861a" stroke-width="3.9" stroke-linecap="round" stroke-linejoin="round"/><path d="M2.8,7 L6.4,10.8 L13.6,2.8" fill="none" stroke="#36ba36" stroke-width="2.3" stroke-linecap="round" stroke-linejoin="round"/></svg></div><div class="a" style="left:1057px;top:510px;width:13px;height:13px;"><svg width="16" height="16" viewBox="0 0 16 16" style="position:absolute;left:0;top:-1px;overflow:visible"><rect x="0.5" y="1.5" width="12" height="12" fill="url(#cbg)" stroke="#2b3b4b" stroke-width="1"/><path d="M2.8,7 L6.4,10.8 L13.6,2.8" fill="none" stroke="#1a861a" stroke-width="3.9" stroke-linecap="round" stroke-linejoin="round"/><path d="M2.8,7 L6.4,10.8 L13.6,2.8" fill="none" stroke="#36ba36" stroke-width="2.3" stroke-linecap="round" stroke-linejoin="round"/></svg></div><div class="a" style="left:1186px;top:510px;width:13px;height:13px;"><svg width="16" height="16" viewBox="0 0 16 16" style="position:absolute;left:0;top:-1px;overflow:visible"><rect x="0.5" y="1.5" width="12" height="12" fill="url(#cbg)" stroke="#2b3b4b" stroke-width="1"/><path d="M2.8,7 L6.4,10.8 L13.6,2.8" fill="none" stroke="#1a861a" stroke-width="3.9" stroke-linecap="round" stroke-linejoin="round"/><path d="M2.8,7 L6.4,10.8 L13.6,2.8" fill="none" stroke="#36ba36" stroke-width="2.3" stroke-linecap="round" stroke-linejoin="round"/></svg></div><div class="a" style="left:482px;top:528px;width:777px;height:24px;background:linear-gradient(180deg,#f5f5f5,#f1f1f1);border-top:1px solid #ffffff;border-bottom:1px solid #e6e6e6;"></div><div class="t" style="left:489px;top:532.84px;font-size:12px;letter-spacing:0.420px;color:#111;font-weight:normal;-webkit-text-stroke:0.12px currentColor;">Backup di rete co...</div><div class="a" style="left:670px;top:534px;width:13px;height:13px;"><svg width="16" height="16" viewBox="0 0 16 16" style="position:absolute;left:0;top:-1px;overflow:visible"><rect x="0.5" y="1.5" width="12" height="12" fill="url(#cbg)" stroke="#2b3b4b" stroke-width="1"/><path d="M2.8,7 L6.4,10.8 L13.6,2.8" fill="none" stroke="#1a861a" stroke-width="3.9" stroke-linecap="round" stroke-linejoin="round"/><path d="M2.8,7 L6.4,10.8 L13.6,2.8" fill="none" stroke="#36ba36" stroke-width="2.3" stroke-linecap="round" stroke-linejoin="round"/></svg></div><div class="a" style="left:799px;top:534px;width:13px;height:13px;"><svg width="16" height="16" viewBox="0 0 16 16" style="position:absolute;left:0;top:-1px;overflow:visible"><rect x="0.5" y="1.5" width="12" height="12" fill="url(#cbg)" stroke="#2b3b4b" stroke-width="1"/></svg></div><div class="a" style="left:928px;top:534px;width:13px;height:13px;"><svg width="16" height="16" viewBox="0 0 16 16" style="position:absolute;left:0;top:-1px;overflow:visible"><rect x="0.5" y="1.5" width="12" height="12" fill="url(#cbg)" stroke="#2b3b4b" stroke-width="1"/></svg></div><div class="a" style="left:1057px;top:534px;width:13px;height:13px;"><svg width="16" height="16" viewBox="0 0 16 16" style="position:absolute;left:0;top:-1px;overflow:visible"><rect x="0.5" y="1.5" width="12" height="12" fill="url(#cbg)" stroke="#2b3b4b" stroke-width="1"/></svg></div><div class="a" style="left:1186px;top:534px;width:13px;height:13px;"><svg width="16" height="16" viewBox="0 0 16 16" style="position:absolute;left:0;top:-1px;overflow:visible"><rect x="0.5" y="1.5" width="12" height="12" fill="url(#cbg)" stroke="#2b3b4b" stroke-width="1"/></svg></div><div class="a" style="left:482px;top:552px;width:777px;height:24px;background:linear-gradient(180deg,#fdfdfd,#f8f8f8);border-top:1px solid #ffffff;border-bottom:1px solid #e6e6e6;"></div><div class="t" style="left:489px;top:556.84px;font-size:12px;letter-spacing:0.470px;color:#111;font-weight:normal;-webkit-text-stroke:0.12px currentColor;">Backup di Amazon...</div><div class="a" style="left:670px;top:558px;width:13px;height:13px;"><svg width="16" height="16" viewBox="0 0 16 16" style="position:absolute;left:0;top:-1px;overflow:visible"><rect x="0.5" y="1.5" width="12" height="12" fill="url(#cbg)" stroke="#2b3b4b" stroke-width="1"/><path d="M2.8,7 L6.4,10.8 L13.6,2.8" fill="none" stroke="#1a861a" stroke-width="3.9" stroke-linecap="round" stroke-linejoin="round"/><path d="M2.8,7 L6.4,10.8 L13.6,2.8" fill="none" stroke="#36ba36" stroke-width="2.3" stroke-linecap="round" stroke-linejoin="round"/></svg></div><div class="a" style="left:799px;top:558px;width:13px;height:13px;"><svg width="16" height="16" viewBox="0 0 16 16" style="position:absolute;left:0;top:-1px;overflow:visible"><rect x="0.5" y="1.5" width="12" height="12" fill="url(#cbg)" stroke="#2b3b4b" stroke-width="1"/><path d="M2.8,7 L6.4,10.8 L13.6,2.8" fill="none" stroke="#1a861a" stroke-width="3.9" stroke-linecap="round" stroke-linejoin="round"/><path d="M2.8,7 L6.4,10.8 L13.6,2.8" fill="none" stroke="#36ba36" stroke-width="2.3" stroke-linecap="round" stroke-linejoin="round"/></svg></div><div class="a" style="left:928px;top:558px;width:13px;height:13px;"><svg width="16" height="16" viewBox="0 0 16 16" style="position:absolute;left:0;top:-1px;overflow:visible"><rect x="0.5" y="1.5" width="12" height="12" fill="url(#cbg)" stroke="#2b3b4b" stroke-width="1"/><path d="M2.8,7 L6.4,10.8 L13.6,2.8" fill="none" stroke="#1a861a" stroke-width="3.9" stroke-linecap="round" stroke-linejoin="round"/><path d="M2.8,7 L6.4,10.8 L13.6,2.8" fill="none" stroke="#36ba36" stroke-width="2.3" stroke-linecap="round" stroke-linejoin="round"/></svg></div><div class="a" style="left:1057px;top:558px;width:13px;height:13px;"><svg width="16" height="16" viewBox="0 0 16 16" style="position:absolute;left:0;top:-1px;overflow:visible"><rect x="0.5" y="1.5" width="12" height="12" fill="url(#cbg)" stroke="#2b3b4b" stroke-width="1"/><path d="M2.8,7 L6.4,10.8 L13.6,2.8" fill="none" stroke="#1a861a" stroke-width="3.9" stroke-linecap="round" stroke-linejoin="round"/><path d="M2.8,7 L6.4,10.8 L13.6,2.8" fill="none" stroke="#36ba36" stroke-width="2.3" stroke-linecap="round" stroke-linejoin="round"/></svg></div><div class="a" style="left:1186px;top:558px;width:13px;height:13px;"><svg width="16" height="16" viewBox="0 0 16 16" style="position:absolute;left:0;top:-1px;overflow:visible"><rect x="0.5" y="1.5" width="12" height="12" fill="url(#cbg)" stroke="#2b3b4b" stroke-width="1"/><path d="M2.8,7 L6.4,10.8 L13.6,2.8" fill="none" stroke="#1a861a" stroke-width="3.9" stroke-linecap="round" stroke-linejoin="round"/><path d="M2.8,7 L6.4,10.8 L13.6,2.8" fill="none" stroke="#36ba36" stroke-width="2.3" stroke-linecap="round" stroke-linejoin="round"/></svg></div><div class="a" style="left:482px;top:576px;width:777px;height:24px;background:linear-gradient(180deg,#f5f5f5,#f1f1f1);border-top:1px solid #ffffff;border-bottom:1px solid #e6e6e6;"></div><div class="t" style="left:489px;top:580.84px;font-size:12px;letter-spacing:0.492px;color:#111;font-weight:normal;-webkit-text-stroke:0.12px currentColor;">Backup Amazon S...</div><div class="a" style="left:670px;top:582px;width:13px;height:13px;"><svg width="16" height="16" viewBox="0 0 16 16" style="position:absolute;left:0;top:-1px;overflow:visible"><rect x="0.5" y="1.5" width="12" height="12" fill="url(#cbg)" stroke="#2b3b4b" stroke-width="1"/><path d="M2.8,7 L6.4,10.8 L13.6,2.8" fill="none" stroke="#1a861a" stroke-width="3.9" stroke-linecap="round" stroke-linejoin="round"/><path d="M2.8,7 L6.4,10.8 L13.6,2.8" fill="none" stroke="#36ba36" stroke-width="2.3" stroke-linecap="round" stroke-linejoin="round"/></svg></div><div class="a" style="left:799px;top:582px;width:13px;height:13px;"><svg width="16" height="16" viewBox="0 0 16 16" style="position:absolute;left:0;top:-1px;overflow:visible"><rect x="0.5" y="1.5" width="12" height="12" fill="url(#cbg)" stroke="#2b3b4b" stroke-width="1"/></svg></div><div class="a" style="left:928px;top:582px;width:13px;height:13px;"><svg width="16" height="16" viewBox="0 0 16 16" style="position:absolute;left:0;top:-1px;overflow:visible"><rect x="0.5" y="1.5" width="12" height="12" fill="url(#cbg)" stroke="#2b3b4b" stroke-width="1"/></svg></div><div class="a" style="left:1057px;top:582px;width:13px;height:13px;"><svg width="16" height="16" viewBox="0 0 16 16" style="position:absolute;left:0;top:-1px;overflow:visible"><rect x="0.5" y="1.5" width="12" height="12" fill="url(#cbg)" stroke="#2b3b4b" stroke-width="1"/></svg></div><div class="a" style="left:1186px;top:582px;width:13px;height:13px;"><svg width="16" height="16" viewBox="0 0 16 16" style="position:absolute;left:0;top:-1px;overflow:visible"><rect x="0.5" y="1.5" width="12" height="12" fill="url(#cbg)" stroke="#2b3b4b" stroke-width="1"/></svg></div><div class="a" style="left:482px;top:600px;width:777px;height:24px;background:#e4eef9;border-top:1px solid #ffffff;border-bottom:1px solid #e6e6e6;"></div><div class="t" style="left:489px;top:604.84px;font-size:12px;letter-spacing:0.376px;color:#111;font-weight:normal;-webkit-text-stroke:0.12px currentColor;">Ripristino di rete n...</div><div class="a" style="left:670px;top:606px;width:13px;height:13px;"><svg width="16" height="16" viewBox="0 0 16 16" style="position:absolute;left:0;top:-1px;overflow:visible"><rect x="0.5" y="1.5" width="12" height="12" fill="url(#cbg)" stroke="#2b3b4b" stroke-width="1"/><path d="M2.8,7 L6.4,10.8 L13.6,2.8" fill="none" stroke="#1a861a" stroke-width="3.9" stroke-linecap="round" stroke-linejoin="round"/><path d="M2.8,7 L6.4,10.8 L13.6,2.8" fill="none" stroke="#36ba36" stroke-width="2.3" stroke-linecap="round" stroke-linejoin="round"/></svg></div><div class="a" style="left:799px;top:606px;width:13px;height:13px;"><svg width="16" height="16" viewBox="0 0 16 16" style="position:absolute;left:0;top:-1px;overflow:visible"><rect x="0.5" y="1.5" width="12" height="12" fill="url(#cbg)" stroke="#2b3b4b" stroke-width="1"/><path d="M2.8,7 L6.4,10.8 L13.6,2.8" fill="none" stroke="#1a861a" stroke-width="3.9" stroke-linecap="round" stroke-linejoin="round"/><path d="M2.8,7 L6.4,10.8 L13.6,2.8" fill="none" stroke="#36ba36" stroke-width="2.3" stroke-linecap="round" stroke-linejoin="round"/></svg></div><div class="a" style="left:928px;top:606px;width:13px;height:13px;"><svg width="16" height="16" viewBox="0 0 16 16" style="position:absolute;left:0;top:-1px;overflow:visible"><rect x="0.5" y="1.5" width="12" height="12" fill="url(#cbg)" stroke="#2b3b4b" stroke-width="1"/><path d="M2.8,7 L6.4,10.8 L13.6,2.8" fill="none" stroke="#1a861a" stroke-width="3.9" stroke-linecap="round" stroke-linejoin="round"/><path d="M2.8,7 L6.4,10.8 L13.6,2.8" fill="none" stroke="#36ba36" stroke-width="2.3" stroke-linecap="round" stroke-linejoin="round"/></svg></div><div class="a" style="left:1057px;top:606px;width:13px;height:13px;"><svg width="16" height="16" viewBox="0 0 16 16" style="position:absolute;left:0;top:-1px;overflow:visible"><rect x="0.5" y="1.5" width="12" height="12" fill="url(#cbg)" stroke="#2b3b4b" stroke-width="1"/><path d="M2.8,7 L6.4,10.8 L13.6,2.8" fill="none" stroke="#1a861a" stroke-width="3.9" stroke-linecap="round" stroke-linejoin="round"/><path d="M2.8,7 L6.4,10.8 L13.6,2.8" fill="none" stroke="#36ba36" stroke-width="2.3" stroke-linecap="round" stroke-linejoin="round"/></svg></div><div class="a" style="left:1186px;top:606px;width:13px;height:13px;"><svg width="16" height="16" viewBox="0 0 16 16" style="position:absolute;left:0;top:-1px;overflow:visible"><rect x="0.5" y="1.5" width="12" height="12" fill="url(#cbg)" stroke="#2b3b4b" stroke-width="1"/><path d="M2.8,7 L6.4,10.8 L13.6,2.8" fill="none" stroke="#1a861a" stroke-width="3.9" stroke-linecap="round" stroke-linejoin="round"/><path d="M2.8,7 L6.4,10.8 L13.6,2.8" fill="none" stroke="#36ba36" stroke-width="2.3" stroke-linecap="round" stroke-linejoin="round"/></svg></div><div class="a" style="left:482px;top:624px;width:777px;height:24px;background:linear-gradient(180deg,#f5f5f5,#f1f1f1);border-top:1px solid #ffffff;border-bottom:1px solid #e6e6e6;"></div><div class="t" style="left:489px;top:628.84px;font-size:12px;letter-spacing:0.374px;color:#111;font-weight:normal;-webkit-text-stroke:0.12px currentColor;">Ripristino di rete c...</div><div class="a" style="left:670px;top:630px;width:13px;height:13px;"><svg width="16" height="16" viewBox="0 0 16 16" style="position:absolute;left:0;top:-1px;overflow:visible"><rect x="0.5" y="1.5" width="12" height="12" fill="url(#cbg)" stroke="#2b3b4b" stroke-width="1"/><path d="M2.8,7 L6.4,10.8 L13.6,2.8" fill="none" stroke="#1a861a" stroke-width="3.9" stroke-linecap="round" stroke-linejoin="round"/><path d="M2.8,7 L6.4,10.8 L13.6,2.8" fill="none" stroke="#36ba36" stroke-width="2.3" stroke-linecap="round" stroke-linejoin="round"/></svg></div><div class="a" style="left:799px;top:630px;width:13px;height:13px;"><svg width="16" height="16" viewBox="0 0 16 16" style="position:absolute;left:0;top:-1px;overflow:visible"><rect x="0.5" y="1.5" width="12" height="12" fill="url(#cbg)" stroke="#2b3b4b" stroke-width="1"/><path d="M2.8,7 L6.4,10.8 L13.6,2.8" fill="none" stroke="#1a861a" stroke-width="3.9" stroke-linecap="round" stroke-linejoin="round"/><path d="M2.8,7 L6.4,10.8 L13.6,2.8" fill="none" stroke="#36ba36" stroke-width="2.3" stroke-linecap="round" stroke-linejoin="round"/></svg></div><div class="a" style="left:928px;top:630px;width:13px;height:13px;"><svg width="16" height="16" viewBox="0 0 16 16" style="position:absolute;left:0;top:-1px;overflow:visible"><rect x="0.5" y="1.5" width="12" height="12" fill="url(#cbg)" stroke="#2b3b4b" stroke-width="1"/><path d="M2.8,7 L6.4,10.8 L13.6,2.8" fill="none" stroke="#1a861a" stroke-width="3.9" stroke-linecap="round" stroke-linejoin="round"/><path d="M2.8,7 L6.4,10.8 L13.6,2.8" fill="none" stroke="#36ba36" stroke-width="2.3" stroke-linecap="round" stroke-linejoin="round"/></svg></div><div class="a" style="left:1057px;top:630px;width:13px;height:13px;"><svg width="16" height="16" viewBox="0 0 16 16" style="position:absolute;left:0;top:-1px;overflow:visible"><rect x="0.5" y="1.5" width="12" height="12" fill="url(#cbg)" stroke="#2b3b4b" stroke-width="1"/><path d="M2.8,7 L6.4,10.8 L13.6,2.8" fill="none" stroke="#1a861a" stroke-width="3.9" stroke-linecap="round" stroke-linejoin="round"/><path d="M2.8,7 L6.4,10.8 L13.6,2.8" fill="none" stroke="#36ba36" stroke-width="2.3" stroke-linecap="round" stroke-linejoin="round"/></svg></div><div class="a" style="left:1186px;top:630px;width:13px;height:13px;"><svg width="16" height="16" viewBox="0 0 16 16" style="position:absolute;left:0;top:-1px;overflow:visible"><rect x="0.5" y="1.5" width="12" height="12" fill="url(#cbg)" stroke="#2b3b4b" stroke-width="1"/><path d="M2.8,7 L6.4,10.8 L13.6,2.8" fill="none" stroke="#1a861a" stroke-width="3.9" stroke-linecap="round" stroke-linejoin="round"/><path d="M2.8,7 L6.4,10.8 L13.6,2.8" fill="none" stroke="#36ba36" stroke-width="2.3" stroke-linecap="round" stroke-linejoin="round"/></svg></div><div class="a" style="left:482px;top:648px;width:777px;height:24px;background:linear-gradient(180deg,#fdfdfd,#f8f8f8);border-top:1px solid #ffffff;border-bottom:1px solid #e6e6e6;"></div><div class="t" style="left:489px;top:652.84px;font-size:12px;letter-spacing:0.425px;color:#111;font-weight:normal;-webkit-text-stroke:0.12px currentColor;">Sincronizzazione c...</div><div class="a" style="left:670px;top:654px;width:13px;height:13px;"><svg width="16" height="16" viewBox="0 0 16 16" style="position:absolute;left:0;top:-1px;overflow:visible"><rect x="0.5" y="1.5" width="12" height="12" fill="url(#cbg)" stroke="#2b3b4b" stroke-width="1"/><path d="M2.8,7 L6.4,10.8 L13.6,2.8" fill="none" stroke="#1a861a" stroke-width="3.9" stroke-linecap="round" stroke-linejoin="round"/><path d="M2.8,7 L6.4,10.8 L13.6,2.8" fill="none" stroke="#36ba36" stroke-width="2.3" stroke-linecap="round" stroke-linejoin="round"/></svg></div><div class="a" style="left:799px;top:654px;width:13px;height:13px;"><svg width="16" height="16" viewBox="0 0 16 16" style="position:absolute;left:0;top:-1px;overflow:visible"><rect x="0.5" y="1.5" width="12" height="12" fill="url(#cbg)" stroke="#2b3b4b" stroke-width="1"/><path d="M2.8,7 L6.4,10.8 L13.6,2.8" fill="none" stroke="#1a861a" stroke-width="3.9" stroke-linecap="round" stroke-linejoin="round"/><path d="M2.8,7 L6.4,10.8 L13.6,2.8" fill="none" stroke="#36ba36" stroke-width="2.3" stroke-linecap="round" stroke-linejoin="round"/></svg></div><div class="a" style="left:928px;top:654px;width:13px;height:13px;"><svg width="16" height="16" viewBox="0 0 16 16" style="position:absolute;left:0;top:-1px;overflow:visible"><rect x="0.5" y="1.5" width="12" height="12" fill="url(#cbg)" stroke="#2b3b4b" stroke-width="1"/><path d="M2.8,7 L6.4,10.8 L13.6,2.8" fill="none" stroke="#1a861a" stroke-width="3.9" stroke-linecap="round" stroke-linejoin="round"/><path d="M2.8,7 L6.4,10.8 L13.6,2.8" fill="none" stroke="#36ba36" stroke-width="2.3" stroke-linecap="round" stroke-linejoin="round"/></svg></div><div class="a" style="left:1057px;top:654px;width:13px;height:13px;"><svg width="16" height="16" viewBox="0 0 16 16" style="position:absolute;left:0;top:-1px;overflow:visible"><rect x="0.5" y="1.5" width="12" height="12" fill="url(#cbg)" stroke="#2b3b4b" stroke-width="1"/><path d="M2.8,7 L6.4,10.8 L13.6,2.8" fill="none" stroke="#1a861a" stroke-width="3.9" stroke-linecap="round" stroke-linejoin="round"/><path d="M2.8,7 L6.4,10.8 L13.6,2.8" fill="none" stroke="#36ba36" stroke-width="2.3" stroke-linecap="round" stroke-linejoin="round"/></svg></div><div class="a" style="left:1186px;top:654px;width:13px;height:13px;"><svg width="16" height="16" viewBox="0 0 16 16" style="position:absolute;left:0;top:-1px;overflow:visible"><rect x="0.5" y="1.5" width="12" height="12" fill="url(#cbg)" stroke="#2b3b4b" stroke-width="1"/><path d="M2.8,7 L6.4,10.8 L13.6,2.8" fill="none" stroke="#1a861a" stroke-width="3.9" stroke-linecap="round" stroke-linejoin="round"/><path d="M2.8,7 L6.4,10.8 L13.6,2.8" fill="none" stroke="#36ba36" stroke-width="2.3" stroke-linecap="round" stroke-linejoin="round"/></svg></div><div class="a" style="left:482px;top:672px;width:777px;height:24px;background:linear-gradient(180deg,#f5f5f5,#f1f1f1);border-top:1px solid #ffffff;border-bottom:1px solid #e6e6e6;"></div><div class="t" style="left:489px;top:676.84px;font-size:12px;letter-spacing:0.440px;color:#111;font-weight:normal;-webkit-text-stroke:0.12px currentColor;">Backup locale ann...</div><div class="a" style="left:670px;top:678px;width:13px;height:13px;"><svg width="16" height="16" viewBox="0 0 16 16" style="position:absolute;left:0;top:-1px;overflow:visible"><rect x="0.5" y="1.5" width="12" height="12" fill="url(#cbg)" stroke="#2b3b4b" stroke-width="1"/><path d="M2.8,7 L6.4,10.8 L13.6,2.8" fill="none" stroke="#1a861a" stroke-width="3.9" stroke-linecap="round" stroke-linejoin="round"/><path d="M2.8,7 L6.4,10.8 L13.6,2.8" fill="none" stroke="#36ba36" stroke-width="2.3" stroke-linecap="round" stroke-linejoin="round"/></svg></div><div class="a" style="left:799px;top:678px;width:13px;height:13px;"><svg width="16" height="16" viewBox="0 0 16 16" style="position:absolute;left:0;top:-1px;overflow:visible"><rect x="0.5" y="1.5" width="12" height="12" fill="url(#cbg)" stroke="#2b3b4b" stroke-width="1"/><path d="M2.8,7 L6.4,10.8 L13.6,2.8" fill="none" stroke="#1a861a" stroke-width="3.9" stroke-linecap="round" stroke-linejoin="round"/><path d="M2.8,7 L6.4,10.8 L13.6,2.8" fill="none" stroke="#36ba36" stroke-width="2.3" stroke-linecap="round" stroke-linejoin="round"/></svg></div><div class="a" style="left:928px;top:678px;width:13px;height:13px;"><svg width="16" height="16" viewBox="0 0 16 16" style="position:absolute;left:0;top:-1px;overflow:visible"><rect x="0.5" y="1.5" width="12" height="12" fill="url(#cbg)" stroke="#2b3b4b" stroke-width="1"/><path d="M2.8,7 L6.4,10.8 L13.6,2.8" fill="none" stroke="#1a861a" stroke-width="3.9" stroke-linecap="round" stroke-linejoin="round"/><path d="M2.8,7 L6.4,10.8 L13.6,2.8" fill="none" stroke="#36ba36" stroke-width="2.3" stroke-linecap="round" stroke-linejoin="round"/></svg></div><div class="a" style="left:1057px;top:678px;width:13px;height:13px;"><svg width="16" height="16" viewBox="0 0 16 16" style="position:absolute;left:0;top:-1px;overflow:visible"><rect x="0.5" y="1.5" width="12" height="12" fill="url(#cbg)" stroke="#2b3b4b" stroke-width="1"/><path d="M2.8,7 L6.4,10.8 L13.6,2.8" fill="none" stroke="#1a861a" stroke-width="3.9" stroke-linecap="round" stroke-linejoin="round"/><path d="M2.8,7 L6.4,10.8 L13.6,2.8" fill="none" stroke="#36ba36" stroke-width="2.3" stroke-linecap="round" stroke-linejoin="round"/></svg></div><div class="a" style="left:1186px;top:678px;width:13px;height:13px;"><svg width="16" height="16" viewBox="0 0 16 16" style="position:absolute;left:0;top:-1px;overflow:visible"><rect x="0.5" y="1.5" width="12" height="12" fill="url(#cbg)" stroke="#2b3b4b" stroke-width="1"/><path d="M2.8,7 L6.4,10.8 L13.6,2.8" fill="none" stroke="#1a861a" stroke-width="3.9" stroke-linecap="round" stroke-linejoin="round"/><path d="M2.8,7 L6.4,10.8 L13.6,2.8" fill="none" stroke="#36ba36" stroke-width="2.3" stroke-linecap="round" stroke-linejoin="round"/></svg></div><div class="a" style="left:482px;top:696px;width:777px;height:24px;background:linear-gradient(180deg,#fdfdfd,#f8f8f8);border-top:1px solid #ffffff;border-bottom:1px solid #e6e6e6;"></div><div class="t" style="left:489px;top:700.84px;font-size:12px;letter-spacing:0.440px;color:#111;font-weight:normal;-webkit-text-stroke:0.12px currentColor;">Backup locale non...</div><div class="a" style="left:670px;top:702px;width:13px;height:13px;"><svg width="16" height="16" viewBox="0 0 16 16" style="position:absolute;left:0;top:-1px;overflow:visible"><rect x="0.5" y="1.5" width="12" height="12" fill="url(#cbg)" stroke="#2b3b4b" stroke-width="1"/><path d="M2.8,7 L6.4,10.8 L13.6,2.8" fill="none" stroke="#1a861a" stroke-width="3.9" stroke-linecap="round" stroke-linejoin="round"/><path d="M2.8,7 L6.4,10.8 L13.6,2.8" fill="none" stroke="#36ba36" stroke-width="2.3" stroke-linecap="round" stroke-linejoin="round"/></svg></div><div class="a" style="left:799px;top:702px;width:13px;height:13px;"><svg width="16" height="16" viewBox="0 0 16 16" style="position:absolute;left:0;top:-1px;overflow:visible"><rect x="0.5" y="1.5" width="12" height="12" fill="url(#cbg)" stroke="#2b3b4b" stroke-width="1"/><path d="M2.8,7 L6.4,10.8 L13.6,2.8" fill="none" stroke="#1a861a" stroke-width="3.9" stroke-linecap="round" stroke-linejoin="round"/><path d="M2.8,7 L6.4,10.8 L13.6,2.8" fill="none" stroke="#36ba36" stroke-width="2.3" stroke-linecap="round" stroke-linejoin="round"/></svg></div><div class="a" style="left:928px;top:702px;width:13px;height:13px;"><svg width="16" height="16" viewBox="0 0 16 16" style="position:absolute;left:0;top:-1px;overflow:visible"><rect x="0.5" y="1.5" width="12" height="12" fill="url(#cbg)" stroke="#2b3b4b" stroke-width="1"/><path d="M2.8,7 L6.4,10.8 L13.6,2.8" fill="none" stroke="#1a861a" stroke-width="3.9" stroke-linecap="round" stroke-linejoin="round"/><path d="M2.8,7 L6.4,10.8 L13.6,2.8" fill="none" stroke="#36ba36" stroke-width="2.3" stroke-linecap="round" stroke-linejoin="round"/></svg></div><div class="a" style="left:1057px;top:702px;width:13px;height:13px;"><svg width="16" height="16" viewBox="0 0 16 16" style="position:absolute;left:0;top:-1px;overflow:visible"><rect x="0.5" y="1.5" width="12" height="12" fill="url(#cbg)" stroke="#2b3b4b" stroke-width="1"/><path d="M2.8,7 L6.4,10.8 L13.6,2.8" fill="none" stroke="#1a861a" stroke-width="3.9" stroke-linecap="round" stroke-linejoin="round"/><path d="M2.8,7 L6.4,10.8 L13.6,2.8" fill="none" stroke="#36ba36" stroke-width="2.3" stroke-linecap="round" stroke-linejoin="round"/></svg></div><div class="a" style="left:1186px;top:702px;width:13px;height:13px;"><svg width="16" height="16" viewBox="0 0 16 16" style="position:absolute;left:0;top:-1px;overflow:visible"><rect x="0.5" y="1.5" width="12" height="12" fill="url(#cbg)" stroke="#2b3b4b" stroke-width="1"/><path d="M2.8,7 L6.4,10.8 L13.6,2.8" fill="none" stroke="#1a861a" stroke-width="3.9" stroke-linecap="round" stroke-linejoin="round"/><path d="M2.8,7 L6.4,10.8 L13.6,2.8" fill="none" stroke="#36ba36" stroke-width="2.3" stroke-linecap="round" stroke-linejoin="round"/></svg></div><div class="a" style="left:482px;top:720px;width:777px;height:24px;background:linear-gradient(180deg,#f5f5f5,#f1f1f1);border-top:1px solid #ffffff;border-bottom:1px solid #e6e6e6;"></div><div class="t" style="left:489px;top:724.84px;font-size:12px;letter-spacing:0.450px;color:#111;font-weight:normal;-webkit-text-stroke:0.12px currentColor;">Backup locale com...</div><div class="a" style="left:670px;top:726px;width:13px;height:13px;"><svg width="16" height="16" viewBox="0 0 16 16" style="position:absolute;left:0;top:-1px;overflow:visible"><rect x="0.5" y="1.5" width="12" height="12" fill="url(#cbg)" stroke="#2b3b4b" stroke-width="1"/><path d="M2.8,7 L6.4,10.8 L13.6,2.8" fill="none" stroke="#1a861a" stroke-width="3.9" stroke-linecap="round" stroke-linejoin="round"/><path d="M2.8,7 L6.4,10.8 L13.6,2.8" fill="none" stroke="#36ba36" stroke-width="2.3" stroke-linecap="round" stroke-linejoin="round"/></svg></div><div class="a" style="left:799px;top:726px;width:13px;height:13px;"><svg width="16" height="16" viewBox="0 0 16 16" style="position:absolute;left:0;top:-1px;overflow:visible"><rect x="0.5" y="1.5" width="12" height="12" fill="url(#cbg)" stroke="#2b3b4b" stroke-width="1"/></svg></div><div class="a" style="left:928px;top:726px;width:13px;height:13px;"><svg width="16" height="16" viewBox="0 0 16 16" style="position:absolute;left:0;top:-1px;overflow:visible"><rect x="0.5" y="1.5" width="12" height="12" fill="url(#cbg)" stroke="#2b3b4b" stroke-width="1"/></svg></div><div class="a" style="left:1057px;top:726px;width:13px;height:13px;"><svg width="16" height="16" viewBox="0 0 16 16" style="position:absolute;left:0;top:-1px;overflow:visible"><rect x="0.5" y="1.5" width="12" height="12" fill="url(#cbg)" stroke="#2b3b4b" stroke-width="1"/></svg></div><div class="a" style="left:1186px;top:726px;width:13px;height:13px;"><svg width="16" height="16" viewBox="0 0 16 16" style="position:absolute;left:0;top:-1px;overflow:visible"><rect x="0.5" y="1.5" width="12" height="12" fill="url(#cbg)" stroke="#2b3b4b" stroke-width="1"/></svg></div><div class="a" style="left:482px;top:744px;width:777px;height:24px;background:linear-gradient(180deg,#fdfdfd,#f8f8f8);border-top:1px solid #ffffff;border-bottom:1px solid #e6e6e6;"></div><div class="t" style="left:489px;top:748.84px;font-size:12px;letter-spacing:0.416px;color:#111;font-weight:normal;-webkit-text-stroke:0.12px currentColor;">Disco di backup lo...</div><div class="a" style="left:670px;top:750px;width:13px;height:13px;"><svg width="16" height="16" viewBox="0 0 16 16" style="position:absolute;left:0;top:-1px;overflow:visible"><rect x="0.5" y="1.5" width="12" height="12" fill="url(#cbg)" stroke="#2b3b4b" stroke-width="1"/><path d="M2.8,7 L6.4,10.8 L13.6,2.8" fill="none" stroke="#1a861a" stroke-width="3.9" stroke-linecap="round" stroke-linejoin="round"/><path d="M2.8,7 L6.4,10.8 L13.6,2.8" fill="none" stroke="#36ba36" stroke-width="2.3" stroke-linecap="round" stroke-linejoin="round"/></svg></div><div class="a" style="left:799px;top:750px;width:13px;height:13px;"><svg width="16" height="16" viewBox="0 0 16 16" style="position:absolute;left:0;top:-1px;overflow:visible"><rect x="0.5" y="1.5" width="12" height="12" fill="url(#cbg)" stroke="#2b3b4b" stroke-width="1"/><path d="M2.8,7 L6.4,10.8 L13.6,2.8" fill="none" stroke="#1a861a" stroke-width="3.9" stroke-linecap="round" stroke-linejoin="round"/><path d="M2.8,7 L6.4,10.8 L13.6,2.8" fill="none" stroke="#36ba36" stroke-width="2.3" stroke-linecap="round" stroke-linejoin="round"/></svg></div><div class="a" style="left:928px;top:750px;width:13px;height:13px;"><svg width="16" height="16" viewBox="0 0 16 16" style="position:absolute;left:0;top:-1px;overflow:visible"><rect x="0.5" y="1.5" width="12" height="12" fill="url(#cbg)" stroke="#2b3b4b" stroke-width="1"/><path d="M2.8,7 L6.4,10.8 L13.6,2.8" fill="none" stroke="#1a861a" stroke-width="3.9" stroke-linecap="round" stroke-linejoin="round"/><path d="M2.8,7 L6.4,10.8 L13.6,2.8" fill="none" stroke="#36ba36" stroke-width="2.3" stroke-linecap="round" stroke-linejoin="round"/></svg></div><div class="a" style="left:1057px;top:750px;width:13px;height:13px;"><svg width="16" height="16" viewBox="0 0 16 16" style="position:absolute;left:0;top:-1px;overflow:visible"><rect x="0.5" y="1.5" width="12" height="12" fill="url(#cbg)" stroke="#2b3b4b" stroke-width="1"/><path d="M2.8,7 L6.4,10.8 L13.6,2.8" fill="none" stroke="#1a861a" stroke-width="3.9" stroke-linecap="round" stroke-linejoin="round"/><path d="M2.8,7 L6.4,10.8 L13.6,2.8" fill="none" stroke="#36ba36" stroke-width="2.3" stroke-linecap="round" stroke-linejoin="round"/></svg></div><div class="a" style="left:1186px;top:750px;width:13px;height:13px;"><svg width="16" height="16" viewBox="0 0 16 16" style="position:absolute;left:0;top:-1px;overflow:visible"><rect x="0.5" y="1.5" width="12" height="12" fill="url(#cbg)" stroke="#2b3b4b" stroke-width="1"/><path d="M2.8,7 L6.4,10.8 L13.6,2.8" fill="none" stroke="#1a861a" stroke-width="3.9" stroke-linecap="round" stroke-linejoin="round"/><path d="M2.8,7 L6.4,10.8 L13.6,2.8" fill="none" stroke="#36ba36" stroke-width="2.3" stroke-linecap="round" stroke-linejoin="round"/></svg></div><div class="a" style="left:482px;top:768px;width:777px;height:24px;background:linear-gradient(180deg,#f5f5f5,#f1f1f1);border-top:1px solid #ffffff;border-bottom:1px solid #e6e6e6;"></div><div class="t" style="left:489px;top:772.84px;font-size:12px;letter-spacing:0.428px;color:#111;font-weight:normal;-webkit-text-stroke:0.12px currentColor;">Backup locale par...</div><div class="a" style="left:670px;top:774px;width:13px;height:13px;"><svg width="16" height="16" viewBox="0 0 16 16" style="position:absolute;left:0;top:-1px;overflow:visible"><rect x="0.5" y="1.5" width="12" height="12" fill="url(#cbg)" stroke="#2b3b4b" stroke-width="1"/><path d="M2.8,7 L6.4,10.8 L13.6,2.8" fill="none" stroke="#1a861a" stroke-width="3.9" stroke-linecap="round" stroke-linejoin="round"/><path d="M2.8,7 L6.4,10.8 L13.6,2.8" fill="none" stroke="#36ba36" stroke-width="2.3" stroke-linecap="round" stroke-linejoin="round"/></svg></div><div class="a" style="left:799px;top:774px;width:13px;height:13px;"><svg width="16" height="16" viewBox="0 0 16 16" style="position:absolute;left:0;top:-1px;overflow:visible"><rect x="0.5" y="1.5" width="12" height="12" fill="url(#cbg)" stroke="#2b3b4b" stroke-width="1"/></svg></div><div class="a" style="left:928px;top:774px;width:13px;height:13px;"><svg width="16" height="16" viewBox="0 0 16 16" style="position:absolute;left:0;top:-1px;overflow:visible"><rect x="0.5" y="1.5" width="12" height="12" fill="url(#cbg)" stroke="#2b3b4b" stroke-width="1"/></svg></div><div class="a" style="left:1057px;top:774px;width:13px;height:13px;"><svg width="16" height="16" viewBox="0 0 16 16" style="position:absolute;left:0;top:-1px;overflow:visible"><rect x="0.5" y="1.5" width="12" height="12" fill="url(#cbg)" stroke="#2b3b4b" stroke-width="1"/></svg></div><div class="a" style="left:1186px;top:774px;width:13px;height:13px;"><svg width="16" height="16" viewBox="0 0 16 16" style="position:absolute;left:0;top:-1px;overflow:visible"><rect x="0.5" y="1.5" width="12" height="12" fill="url(#cbg)" stroke="#2b3b4b" stroke-width="1"/></svg></div><div class="a" style="left:482px;top:792px;width:777px;height:22px;background:linear-gradient(180deg,#f4f6f8,#e2e7ec);border-top:1px solid #fbfcfd;"></div><div class="a" style="left:485px;top:799px;width:9px;height:9px;border:1px solid #666;background:#f4f4f4;"></div><div class="a" style="left:487px;top:803px;width:5px;height:1px;background:#333;"></div><div class="t" style="left:499px;top:798.84px;font-size:12px;letter-spacing:0.939px;color:#143a6a;font-weight:bold;">Archiviazione esterna</div><div class="a" style="left:1259px;top:433px;width:19px;height:381px;background:#f4f4f4;"></div><svg class="a" style="left:1262px;top:436px" width="14" height="10" viewBox="0 0 14 10"><path d="M3.5,7 L7,3.5 L10.5,7 Z" fill="#777"/></svg><svg class="a" style="left:1262px;top:800px" width="14" height="10" viewBox="0 0 14 10"><path d="M3.5,3 L7,6.5 L10.5,3 Z" fill="#333"/></svg><div class="a" style="left:1262px;top:451px;width:15px;height:72px;border:1px solid #a5a5a5;border-radius:2px;background:linear-gradient(90deg,#f8f8f8,#d8d8d8);"></div><div class="a" style="left:1266px;top:483px;width:6px;height:6px;border-top:1px solid #777;border-bottom:1px solid #777;"></div><div class="a" style="left:1266px;top:485px;width:6px;height:1px;background:#777;"></div><div class="a" style="left:1579px;top:202px;width:341px;height:758px;background:#1a3050;"></div><div class="a" style="left:1580px;top:203px;width:340px;height:757px;background:#ffffff;"></div><div class="a" style="left:1581px;top:204px;width:339px;height:756px;background:linear-gradient(180deg,#eef1f7 0,#e4e9f1 300px,#e6ebf2 757px);"></div><svg class="a" style="left:1580px;top:203px" width="340" height="757" viewBox="0 0 340 757"><path d="M0,300 Q170,150 340,60 L340,0 L200,0 Q90,120 0,200 Z" fill="#ffffff" fill-opacity="0.18"/></svg><svg class="a" style="left:1598px;top:219px" width="26" height="29" viewBox="0 0 26 29"><path d="M13,1.5 C17,3 21,3.5 24.5,3 L24.5,14 C24.5,21 19,25.5 13,27.5 C7,25.5 1.5,21 1.5,14 L1.5,3 C5,3.5 9,3 13,1.5 Z" fill="#2a2a2a" stroke="#111" stroke-width="1"/><path d="M3.5,7 C7,6.5 10,5.5 13,4 C16,5.5 19,6.5 22.5,7" fill="none" stroke="#ddd" stroke-width="1.3"/><path d="M10.5,9 H15.5 V13 H19.5 V18 H15.5 V22 H10.5 V18 H6.5 V13 H10.5 Z" fill="#fff"/></svg><div class="t" style="left:1639.5px;top:226.00px;font-size:13px;letter-spacing:0.473px;color:#1b4584;font-weight:bold;">Stato del sistema</div><svg class="a" style="left:1600px;top:402px" width="25" height="25" viewBox="0 0 25 25"><rect x="2.8" y="3" width="8" height="13" rx="4" transform="rotate(-45 6.8 9.5)" fill="#fff" stroke="#222" stroke-width="2.4"/><rect x="13" y="10" width="8" height="13" rx="4" transform="rotate(-45 17 16.5)" fill="#fff" stroke="#111" stroke-width="2.4"/><path d="M9,9 L15.5,15.5" stroke="#222" stroke-width="2.6"/></svg><div class="t" style="left:1639.5px;top:406.00px;font-size:13px;letter-spacing:0.278px;color:#1b4584;font-weight:bold;">Connessioni correnti</div><svg class="a" style="left:1600px;top:580px" width="24" height="27" viewBox="0 0 24 27"><path d="M2,2 H15 L22,9 V25 H2 Z" fill="#fff" stroke="#222" stroke-width="3" stroke-linejoin="round"/><path d="M14.5,2.5 V9.5 H21.5" fill="#f4f4f4" stroke="#333" stroke-width="2"/><rect x="5" y="5.5" width="4" height="2" fill="#444"/><rect x="5" y="10" width="4" height="2" fill="#555"/><rect x="5" y="15" width="13" height="2.2" fill="#111"/><rect x="5" y="19.5" width="13" height="2.2" fill="#111"/></svg><div class="t" style="left:1639.5px;top:586.00px;font-size:13px;letter-spacing:0.436px;color:#1b4584;font-weight:bold;">Registri recenti</div><svg class="a" style="left:1600px;top:761px" width="25" height="25" viewBox="0 0 25 25"><path d="M0.5,2 Q0.5,0.5 2,0.5 H11 L12,3 H22 V11 H5 L0.5,19 Z" fill="#555"/><path d="M0.5,19 L4.5,11.5 H22.5 L24,12.5 L22,23.5 H4 Z" fill="#fff"/><path d="M4.5,13.5 H19.5 L20.5,14 H24 L22,23.5 H4 Z" fill="#484848"/></svg><div class="t" style="left:1639.5px;top:766.00px;font-size:13px;letter-spacing:0.382px;color:#1b4584;font-weight:bold;">Registro modifica file</div><div class="a" style="left:1592px;top:254px;width:317px;height:137px;border:1px solid #56606c;border-radius:5px;background:linear-gradient(180deg,#f7f7f9 0,#e8eaef 40%,#c7cddb 100%);"></div><div class="a" style="left:1616px;top:293px;width:58px;height:58px;border-radius:29px;background:radial-gradient(circle at 50% 30%,#8ee68e 0,#3cc23c 35%,#1aa01a 70%,#0f8a0f 100%);box-shadow:0 0 6px rgba(60,200,60,0.55);"></div><div class="a" style="left:1624px;top:297px;width:42px;height:24px;border-radius:21px 21px 14px 14px;background:linear-gradient(180deg,rgba(255,255,255,0.55),rgba(255,255,255,0.05));"></div><svg class="a" style="left:1616px;top:293px" width="58" height="58" viewBox="0 0 58 58"><path d="M14.5,31 L24,40 L43,21" fill="none" stroke="#fff" stroke-width="6.5" stroke-linecap="butt" stroke-linejoin="miter"/></svg><div class="t" style="left:1702.5px;top:280.76px;font-size:18px;letter-spacing:0.934px;color:#2b9a2b;font-weight:normal;">Buono</div><div class="t" style="left:1702.5px;top:304.84px;font-size:12px;letter-spacing:1.022px;color:#555;font-weight:normal;-webkit-text-stroke:0.12px currentColor;">DiskStation funziona</div><div class="t" style="left:1702.5px;top:318.84px;font-size:12px;letter-spacing:1.289px;color:#555;font-weight:normal;-webkit-text-stroke:0.12px currentColor;">correttamente.</div><div class="t" style="left:1702.5px;top:367.84px;font-size:12px;letter-spacing:1.222px;color:#1e1e1e;font-weight:normal;-webkit-text-stroke:0.12px currentColor;">Tempo di attività: 01:30:07</div><div class="a" style="left:1592px;top:434px;width:317px;height:137px;border:1px solid #56606c;border-radius:5px;background:linear-gradient(180deg,#f7f7f9 0,#e8eaef 40%,#c7cddb 100%);"></div><div class="a" style="left:1646px;top:442px;width:253px;height:25px;background:linear-gradient(180deg,#f7f7f9,#eceef2);"></div><div class="a" style="left:1646px;top:467px;width:253px;height:96px;background:#fff;"></div><svg class="a" style="left:1654px;top:446px" width="14" height="15" viewBox="0 0 14 15"><ellipse cx="7" cy="4.5" rx="3.3" ry="4" fill="#444"/><path d="M0.5,14.5 Q1,9.5 5,9 L9,9 Q13,9.5 13.5,14.5 Z" fill="#444"/></svg><div class="t" style="left:1671.4px;top:446.84px;font-size:12px;letter-spacing:0.578px;color:#222;font-weight:normal;-webkit-text-stroke:0.12px currentColor;">admin</div><div class="t" style="left:1750.4px;top:446.84px;font-size:12px;letter-spacing:-0.709px;color:#222;font-weight:normal;-webkit-text-stroke:0.12px currentColor;">HTTP</div><div class="t" style="left:1790px;top:446.84px;font-size:12px;letter-spacing:0.830px;color:#222;font-weight:normal;-webkit-text-stroke:0.12px currentColor;">01:22:53</div><svg class="a" style="left:1875px;top:447px" width="20" height="14" viewBox="0 0 20 14"><path d="M6.5,3 L11,7.5 L8,10 L5.5,12 L2.2,11.8 L2,8.5 L4,6 Z" fill="#333"/><path d="M7.5,4 L9.5,1.5 M10,6.5 L12.5,4.5" stroke="#333" stroke-width="1.3"/><circle cx="15" cy="9" r="2.5" fill="#fbeeee" stroke="#c84848" stroke-width="1.2"/><path d="M13.4,10.6 L16.6,7.4" stroke="#c84848" stroke-width="1"/></svg><svg class="a" style="left:1614px;top:467px" width="14" height="9" viewBox="0 0 14 9"><path d="M2,7 L7,2.5 L12,7" fill="none" stroke="#b5b9c0" stroke-width="2.4"/></svg><div class="t" style="left:1612.7px;top:491.84px;font-size:12px;letter-spacing:0.914px;color:#222;font-weight:normal;-webkit-text-stroke:0.12px currentColor;">1/1</div><svg class="a" style="left:1614px;top:517px" width="14" height="9" viewBox="0 0 14 9"><path d="M2,2 L7,6.5 L12,2" fill="none" stroke="#b5b9c0" stroke-width="2.4"/></svg><div class="a" style="left:1592px;top:614px;width:317px;height:137px;border:1px solid #56606c;border-radius:5px;background:linear-gradient(180deg,#f7f7f9 0,#e8eaef 40%,#c7cddb 100%);"></div><div class="a" style="left:1647px;top:622px;width:253px;height:24px;background:linear-gradient(180deg,#f1f2f5,#eceef2);"></div><div class="a" style="left:1654px;top:627px;width:14px;height:14px;border-radius:7px;background:radial-gradient(circle at 45% 30%,#a8d0f8 0,#4a90e0 50%,#2a6cc4 100%);"></div><div class="t" style="left:1654px;top:628px;width:14px;text-align:center;font-size:11px;font-weight:bold;color:#fff;">i</div><div class="a" style="left:1647px;top:646px;width:253px;height:24px;background:linear-gradient(180deg,#dfe2e8,#d9dce3);"></div><div class="a" style="left:1654px;top:651px;width:14px;height:14px;border-radius:7px;background:radial-gradient(circle at 45% 30%,#a8d0f8 0,#4a90e0 50%,#2a6cc4 100%);"></div><div class="t" style="left:1654px;top:652px;width:14px;text-align:center;font-size:11px;font-weight:bold;color:#fff;">i</div><div class="a" style="left:1647px;top:670px;width:253px;height:24px;background:linear-gradient(180deg,#f1f2f5,#eceef2);"></div><div class="a" style="left:1654px;top:675px;width:14px;height:14px;border-radius:7px;background:radial-gradient(circle at 45% 30%,#a8d0f8 0,#4a90e0 50%,#2a6cc4 100%);"></div><div class="t" style="left:1654px;top:676px;width:14px;text-align:center;font-size:11px;font-weight:bold;color:#fff;">i</div><div class="a" style="left:1647px;top:694px;width:253px;height:24px;background:linear-gradient(180deg,#dfe2e8,#d9dce3);"></div><div class="a" style="left:1654px;top:699px;width:14px;height:14px;border-radius:7px;background:radial-gradient(circle at 45% 30%,#a8d0f8 0,#4a90e0 50%,#2a6cc4 100%);"></div><div class="t" style="left:1654px;top:700px;width:14px;text-align:center;font-size:11px;font-weight:bold;color:#fff;">i</div><div class="a" style="left:1647px;top:718px;width:253px;height:24px;background:linear-gradient(180deg,#f1f2f5,#eceef2);"></div><div class="a" style="left:1654px;top:723px;width:14px;height:14px;border-radius:7px;background:radial-gradient(circle at 45% 30%,#a8d0f8 0,#4a90e0 50%,#2a6cc4 100%);"></div><div class="t" style="left:1654px;top:724px;width:14px;text-align:center;font-size:11px;font-weight:bold;color:#fff;">i</div><div class="t" style="left:1680px;top:626.84px;font-size:12px;letter-spacing:0.427px;color:#222;font-weight:normal;-webkit-text-stroke:0.12px currentColor;">System successfully started Web St...</div><div class="t" style="left:1680px;top:650.84px;font-size:12px;letter-spacing:0.406px;color:#222;font-weight:normal;-webkit-text-stroke:0.12px currentColor;">System successfully enabled WebD...</div><div class="t" style="left:1680px;top:674.84px;font-size:12px;letter-spacing:0.391px;color:#222;font-weight:normal;-webkit-text-stroke:0.12px currentColor;">System successfully restarted FTP...</div><div class="t" style="left:1680px;top:698.84px;font-size:12px;letter-spacing:0.305px;color:#222;font-weight:normal;-webkit-text-stroke:0.12px currentColor;">FTP service was started.</div><div class="t" style="left:1680px;top:722.84px;font-size:12px;letter-spacing:0.591px;color:#222;font-weight:normal;-webkit-text-stroke:0.12px currentColor;">User [admin] logged in from [10.16...</div><svg class="a" style="left:1614px;top:647px" width="14" height="9" viewBox="0 0 14 9"><path d="M2,7 L7,2.5 L12,7" fill="none" stroke="#b5b9c0" stroke-width="2.4"/></svg><div class="t" style="left:1612.7px;top:671.84px;font-size:12px;letter-spacing:0.964px;color:#222;font-weight:normal;-webkit-text-stroke:0.12px currentColor;">1/5</div><svg class="a" style="left:1614px;top:697px" width="14" height="9" viewBox="0 0 14 9"><path d="M2,2 L7,6.5 L12,2" fill="none" stroke="#333" stroke-width="2.8"/></svg><div class="a" style="left:1592px;top:794px;width:317px;height:137px;border:1px solid #8a9099;border-radius:5px;background:linear-gradient(180deg,#ececee 0,#e2e3e6 40%,#c8ccd6 100%);"></div><div class="a" style="left:1647px;top:802px;width:253px;height:121px;background:#e6e6e6;"></div><svg class="a" style="left:1614px;top:827px" width="14" height="9" viewBox="0 0 14 9"><path d="M2,7 L7,2.5 L12,7" fill="none" stroke="#c2c4c8" stroke-width="2.2"/></svg><div class="t" style="left:1612.7px;top:851.84px;font-size:12px;letter-spacing:1.164px;color:#777;font-weight:normal;-webkit-text-stroke:0.12px currentColor;">0/0</div><svg class="a" style="left:1614px;top:877px" width="14" height="9" viewBox="0 0 14 9"><path d="M2,2 L7,6.5 L12,2" fill="none" stroke="#c2c4c8" stroke-width="2.2"/></svg><div class="a" style="left:1674px;top:847px;width:153px;height:31px;border:1px solid #a0a0a0;background:#f0f0f0;"></div><div class="a" style="left:1677px;top:849px;width:147px;height:27px;border:1px solid #c8c8c8;background:#eeeeee;"></div><div class="t" style="left:1688px;top:856.84px;font-size:12px;letter-spacing:0.451px;color:#222;font-weight:normal;-webkit-text-stroke:0.12px currentColor;">Nessun registro attivo</div><svg class="a" style="left:1850px;top:938px" width="70" height="22" viewBox="0 0 70 22"><path d="M0,22 L18,2 L70,2 L70,22 Z" fill="#f4f6fa" stroke="#c9ced6" stroke-width="1"/><path d="M35.5,9.5 L42,15.5 L48.5,9.5" fill="none" stroke="#222" stroke-width="3"/></svg><div class="a" style="left:1623px;top:900px;width:56px;height:52px;"><div class="a" style="left:7px;top:5px;width:42px;height:42px;transform:rotate(14deg);border:4px solid rgba(105,105,115,0.55);border-radius:7px;background:linear-gradient(170deg,rgba(215,228,250,0.85) 0,rgba(150,175,230,0.85) 55%,rgba(110,140,215,0.85) 100%);"></div><svg class="a" style="left:0;top:0" width="56" height="52" viewBox="0 0 56 52"><path d="M20,20 Q28,26 36,36 M38,18 Q30,25 22,38" fill="none" stroke="rgba(255,255,255,0.8)" stroke-width="3.6" stroke-linecap="round"/></svg></div><div class="t" style="left:1682px;top:918.6px;font-size:25px;font-weight:bold;letter-spacing:0px;color:rgba(140,155,195,0.72);transform:scaleX(0.883);transform-origin:0 0;-webkit-text-stroke:0.7px rgba(95,105,130,0.55);">xtremehardware.com</div><div class="a" style="left:0;top:958px;width:1920px;height:2px;background:#5c6470;"></div></body></html>
